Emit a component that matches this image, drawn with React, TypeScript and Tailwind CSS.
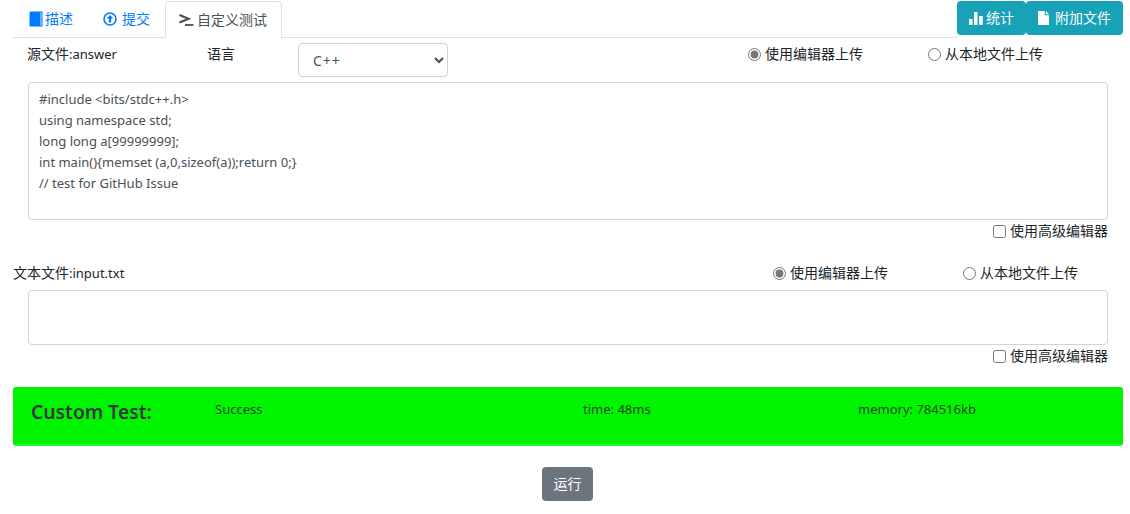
import React from "react";

const font = "font-['Noto_Sans','Noto_Sans_CJK_SC',sans-serif]";

const Book = () => (
  <svg width="14" height="16" viewBox="0 0 14 16" className="shrink-0">
    <path d="M2 0.5H13.5V15.5H2C1 15.5 0.5 15 0.5 14V2C0.5 1 1 0.5 2 0.5Z" fill="#007bff" />
    <path d="M12 1.5V14.5" stroke="#fff" strokeWidth="0.8" />
  </svg>
);

const UpCircle = () => (
  <svg width="14" height="14" viewBox="0 0 14 14" className="shrink-0">
    <circle cx="7" cy="7" r="6" fill="none" stroke="#007bff" strokeWidth="1.6" />
    <path d="M7 3L10.2 6.6H8.2V10.5H5.8V6.6H3.8Z" fill="#007bff" />
  </svg>
);

const Terminal = () => (
  <svg width="15" height="12" viewBox="0 0 15 12" className="shrink-0">
    <path d="M0.5 1L9.5 4.7L0.5 8.4" fill="none" stroke="#495057" strokeWidth="2.2" />
    <path d="M6 11H14.5" stroke="#495057" strokeWidth="1.8" />
  </svg>
);

const Bars = () => (
  <svg width="14" height="13" viewBox="0 0 14 13" className="shrink-0">
    <path d="M0 7H3.5V13H0ZM5 0H8.5V13H5ZM10.2 4H13.7V13H10.2Z" fill="#fff" />
  </svg>
);

const FileIcon = () => (
  <svg width="11" height="14" viewBox="0 0 11 14" className="shrink-0">
    <path d="M0 0H6.8V4.2H11V14H0ZM7.8 0L11 3.2H7.8Z" fill="#fff" />
  </svg>
);

interface RadioPairProps {
  name: string;
  firstWidth: string;
}

const RadioPair: React.FC<RadioPairProps> = ({ name, firstWidth }) => (
  <div className="flex items-center">
    <label className={`flex items-center gap-[4px] ${firstWidth}`}>
      <input type="radio" name={name} defaultChecked className="m-0 h-[13px] w-[13px] accent-[#777]" />
      <span>使用编辑器上传</span>
    </label>
    <label className="flex items-center gap-[4px]">
      <input type="radio" name={name} className="m-0 h-[13px] w-[13px]" />
      <span>从本地文件上传</span>
    </label>
  </div>
);

const AdvancedToggle = () => (
  <div className="mr-[15px] flex h-[20px] items-center justify-end gap-[4px]">
    <input type="checkbox" className="m-0 h-[13px] w-[13px]" />
    <span>使用高级编辑器</span>
  </div>
);

const boxClass = "mx-[15px] rounded border border-[#ced4da] px-[10px] text-[13px] text-[#495057]";

export default function App() {
  return (
    <div className={`${font} h-[514px] w-[1130px] overflow-hidden bg-white pl-[13px] pr-[7px] text-[14px] leading-[20px] text-[#212529]`}>
      <div className="flex h-[38px] items-start justify-between">
        <div className="flex h-[38px] flex-1 border-b border-[#dee2e6] pt-[1px]">
          <div className="flex h-[36px] items-center gap-[2px] pl-[16px] pr-[15px] text-[#007bff]">
            <Book />
            <span>描述</span>
          </div>
          <div className="flex h-[36px] items-center gap-[5px] px-[15px] text-[#007bff]">
            <UpCircle />
            <span>提交</span>
          </div>
          <div className="flex h-[37px] items-center gap-[3px] rounded-t border border-b-0 border-[#dee2e6] bg-white pl-[13px] pr-[14px] text-[#495057]">
            <Terminal />
            <span>自定义测试</span>
          </div>
        </div>
        <div className="flex h-[35px] pt-[1px] text-white">
          <button className="flex h-[34px] items-center gap-[3px] rounded bg-[#17a2b8] px-[12px]">
            <Bars />
            <span>统计</span>
          </button>
          <button className="flex h-[34px] items-center gap-[6px] rounded bg-[#17a2b8] px-[12px]">
            <FileIcon />
            <span>附加文件</span>
          </button>
        </div>
      </div>

      <div className="flex h-[44px] items-start">
        <div className="ml-[14px] mt-[6px] w-[180px]">
          源文件<span className="text-[13px]">:answer</span>
        </div>
        <div className="mt-[6px] w-[91px]">语言</div>
        <select className="mt-[5px] h-[34px] w-[150px] rounded border border-[#ced4da] bg-white pl-[10px] text-[14px] tracking-[1px] text-[#495057]">
          <option>C++</option>
        </select>
        <div className="ml-[300px] mt-[6px]">
          <RadioPair name="source" firstWidth="w-[180px]" />
        </div>
      </div>

      <div className={`${boxClass} h-[138px] py-[6px] leading-[21px]`}>
        <div>#include &lt;bits/stdc++.h&gt;</div>
        <div>using namespace std;</div>
        <div>long long a[99999999];</div>
        <div>int main(){"{"}memset (a,0,sizeof(a));return 0;{"}"}</div>
        <div>// test for GitHub Issue</div>
      </div>
      <div className="pt-[1px]">
        <AdvancedToggle />
      </div>

      <div className="mt-[22px] flex h-[27px] items-start justify-between">
        <div>
          文本文件<span className="text-[13px]">:input.txt</span>
        </div>
        <div className="mr-[45px]">
          <RadioPair name="input" firstWidth="w-[190px]" />
        </div>
      </div>

      <div className={`${boxClass} h-[55px]`} />
      <div className="pt-[1px]">
        <AdvancedToggle />
      </div>

      <div className="mt-[21px] flex h-[59px] items-start rounded-[3px] border border-b-2 border-[#00f400] border-b-[#19fb3a] bg-[#00f400] text-[13px] text-[#1c4a1c]">
        <div className="ml-[17px] mt-[12px] w-[184px] text-[19.3px] font-semibold leading-[24px] text-[#343a40]">Custom Test:</div>
        <div className="mt-[11px] w-[368px]">Success</div>
        <div className="mt-[11px] w-[275px]">time: 48ms</div>
        <div className="mt-[11px]">memory: 784516kb</div>
      </div>

      <div className="mt-[21px] flex justify-center pr-[1px]">
        <button className="h-[34px] w-[51px] rounded bg-[#6c757d] text-white">运行</button>
      </div>
    </div>
  );
}
